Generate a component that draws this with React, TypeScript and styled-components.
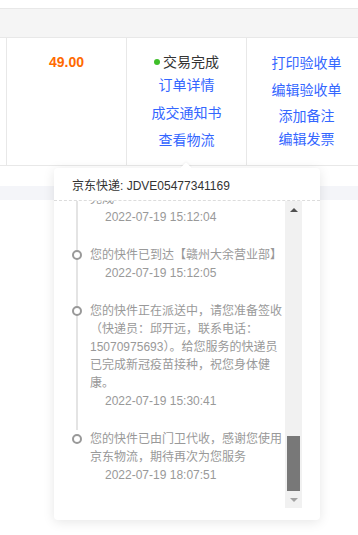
import React from 'react';
import styled, { createGlobalStyle } from 'styled-components';

const GlobalStyle = createGlobalStyle`
  body {
    margin: 0;
    background: #fff;
    font-family: "Liberation Sans", "Noto Sans CJK SC", sans-serif;
  }
`;

const Page = styled.div`
  position: relative;
  width: 358px;
  height: 535px;
  overflow: hidden;
  padding-top: 8px;
  box-sizing: border-box;
`;

const HeadBand = styled.div`
  height: 30px;
  box-sizing: border-box;
  background: #f5f5f5;
  border-top: 1px solid #e8e8e8;
  border-bottom: 1px solid #e8e8e8;
`;

const Row = styled.div`
  display: flex;
  height: 128px;
  box-sizing: border-box;
  border-bottom: 1px solid #e8e8e8;
`;

const Cell = styled.div<{ $w: number }>`
  flex: 0 0 ${(p) => p.$w}px;
  box-sizing: border-box;
  border-right: 1px solid #e8e8e8;
  display: flex;
  flex-direction: column;
  align-items: center;
  padding-top: 14px;
  font-size: 14px;
  line-height: 20px;
`;

const Price = styled.div`
  color: #ff6a00;
  font-weight: bold;
`;

const Status = styled.div`
  display: flex;
  align-items: center;
  color: #333;
`;

const StatusDot = styled.span`
  width: 6px;
  height: 6px;
  border-radius: 50%;
  background: #3fbf2a;
  margin-right: 3px;
`;

const Link = styled.a<{ $mt: number }>`
  margin-top: ${(p) => p.$mt}px;
  color: #3366ff;
  text-decoration: none;
  cursor: pointer;
`;

const Spacer = styled.div`
  height: 20px;
`;

const LightBand = styled.div`
  height: 14px;
  background: #f4f5f9;
`;

const Popover = styled.div`
  position: absolute;
  left: 54px;
  top: 168px;
  width: 266px;
  height: 352px;
  box-sizing: border-box;
  background: #fff;
  border-radius: 4px;
  box-shadow: 0 2px 12px 0 rgba(0, 0, 0, 0.1);
  display: flex;
  flex-direction: column;
`;

const Arrow = styled.div`
  position: absolute;
  top: -4px;
  left: 128px;
  width: 8px;
  height: 8px;
  background: #fff;
  transform: rotate(45deg);
  box-shadow: -1px -1px 2px rgba(0, 0, 0, 0.04);
`;

const PopHeader = styled.div`
  position: relative;
  padding: 9px 18px 5px;
  font-size: 12px;
  line-height: 18px;
  color: #333;
  border-bottom: 1px dashed #dcdcdc;
`;

const PopBody = styled.div`
  flex: 1;
  display: flex;
  padding: 0 18px 12px;
  min-height: 0;
`;

const Track = styled.div`
  flex: 1;
  overflow: hidden;
  display: flex;
  flex-direction: column;
  justify-content: flex-end;
  padding-bottom: 4px;
`;

const Item = styled.div`
  display: grid;
  grid-template-columns: 18px 1fr;
  flex-shrink: 0;
`;

const Marker = styled.div<{ $last?: boolean }>`
  background: ${(p) =>
    p.$last ? 'none' : 'linear-gradient(#e4e4e4, #e4e4e4) no-repeat 4px 0 / 2px 100%'};
`;

const Dot = styled.div`
  width: 10px;
  height: 10px;
  box-sizing: border-box;
  margin-top: 4px;
  border: 2px solid #999;
  border-radius: 50%;
  background: #fff;
`;

const Content = styled.div`
  padding-bottom: 20px;
  font-size: 12px;
  line-height: 18px;
  color: #999;
`;

const Time = styled.div`
  padding-left: 15px;
`;

const Scrollbar = styled.div`
  flex: 0 0 17px;
  background: #f1f1f1;
  display: flex;
  flex-direction: column;
`;

const ScrollBtn = styled.div<{ $down?: boolean }>`
  height: 17px;
  display: flex;
  align-items: center;
  justify-content: center;
  &::after {
    content: '';
    border-left: 4px solid transparent;
    border-right: 4px solid transparent;
    ${(p) =>
      p.$down ? 'border-top: 4px solid #a3a3a3;' : 'border-bottom: 4px solid #505050;'}
  }
`;

const ThumbLane = styled.div`
  flex: 1;
  display: flex;
  flex-direction: column;
  justify-content: flex-end;
`;

const Thumb = styled.div`
  height: 55px;
  margin: 0 2px;
  background: #787878;
`;

const traces = [
  {
    text: '您的快件已到达【赣州分拨中心】，正在进行分拣，快件的分拣作业已经完成',
    time: '2022-07-19 15:12:04',
  },
  { text: '您的快件已到达【赣州大余营业部】', time: '2022-07-19 15:12:05' },
  {
    text: '您的快件正在派送中，请您准备签收（快递员：邱开远，联系电话：15070975693）。给您服务的快递员已完成新冠疫苗接种，祝您身体健康。',
    time: '2022-07-19 15:30:41',
  },
  { text: '您的快件已由门卫代收，感谢您使用京东物流，期待再次为您服务', time: '2022-07-19 18:07:51' },
];

const App = () => (
  <Page>
    <GlobalStyle />
    <HeadBand />
    <Row>
      <Cell $w={7} />
      <Cell $w={120}>
        <Price>49.00</Price>
      </Cell>
      <Cell $w={120}>
        <Status>
          <StatusDot />
          交易完成
        </Status>
        <Link $mt={3}>订单详情</Link>
        <Link $mt={8}>成交通知书</Link>
        <Link $mt={7}>查看物流</Link>
      </Cell>
      <Cell $w={120}>
        <Link $mt={1}>打印验收单</Link>
        <Link $mt={7}>编辑验收单</Link>
        <Link $mt={6}>添加备注</Link>
        <Link $mt={3}>编辑发票</Link>
      </Cell>
    </Row>
    <Spacer />
    <LightBand />

    <Popover>
      <Arrow />
      <PopHeader>京东快递: JDVE05477341169</PopHeader>
      <PopBody>
        <Track>
          {traces.map((t, i) => (
            <Item key={t.time}>
              <Marker $last={i === traces.length - 1}>
                <Dot />
              </Marker>
              <Content>
                {t.text}
                <Time>{t.time}</Time>
              </Content>
            </Item>
          ))}
        </Track>
        <Scrollbar>
          <ScrollBtn />
          <ThumbLane>
            <Thumb />
          </ThumbLane>
          <ScrollBtn $down />
        </Scrollbar>
      </PopBody>
    </Popover>
  </Page>
);

export default App;
